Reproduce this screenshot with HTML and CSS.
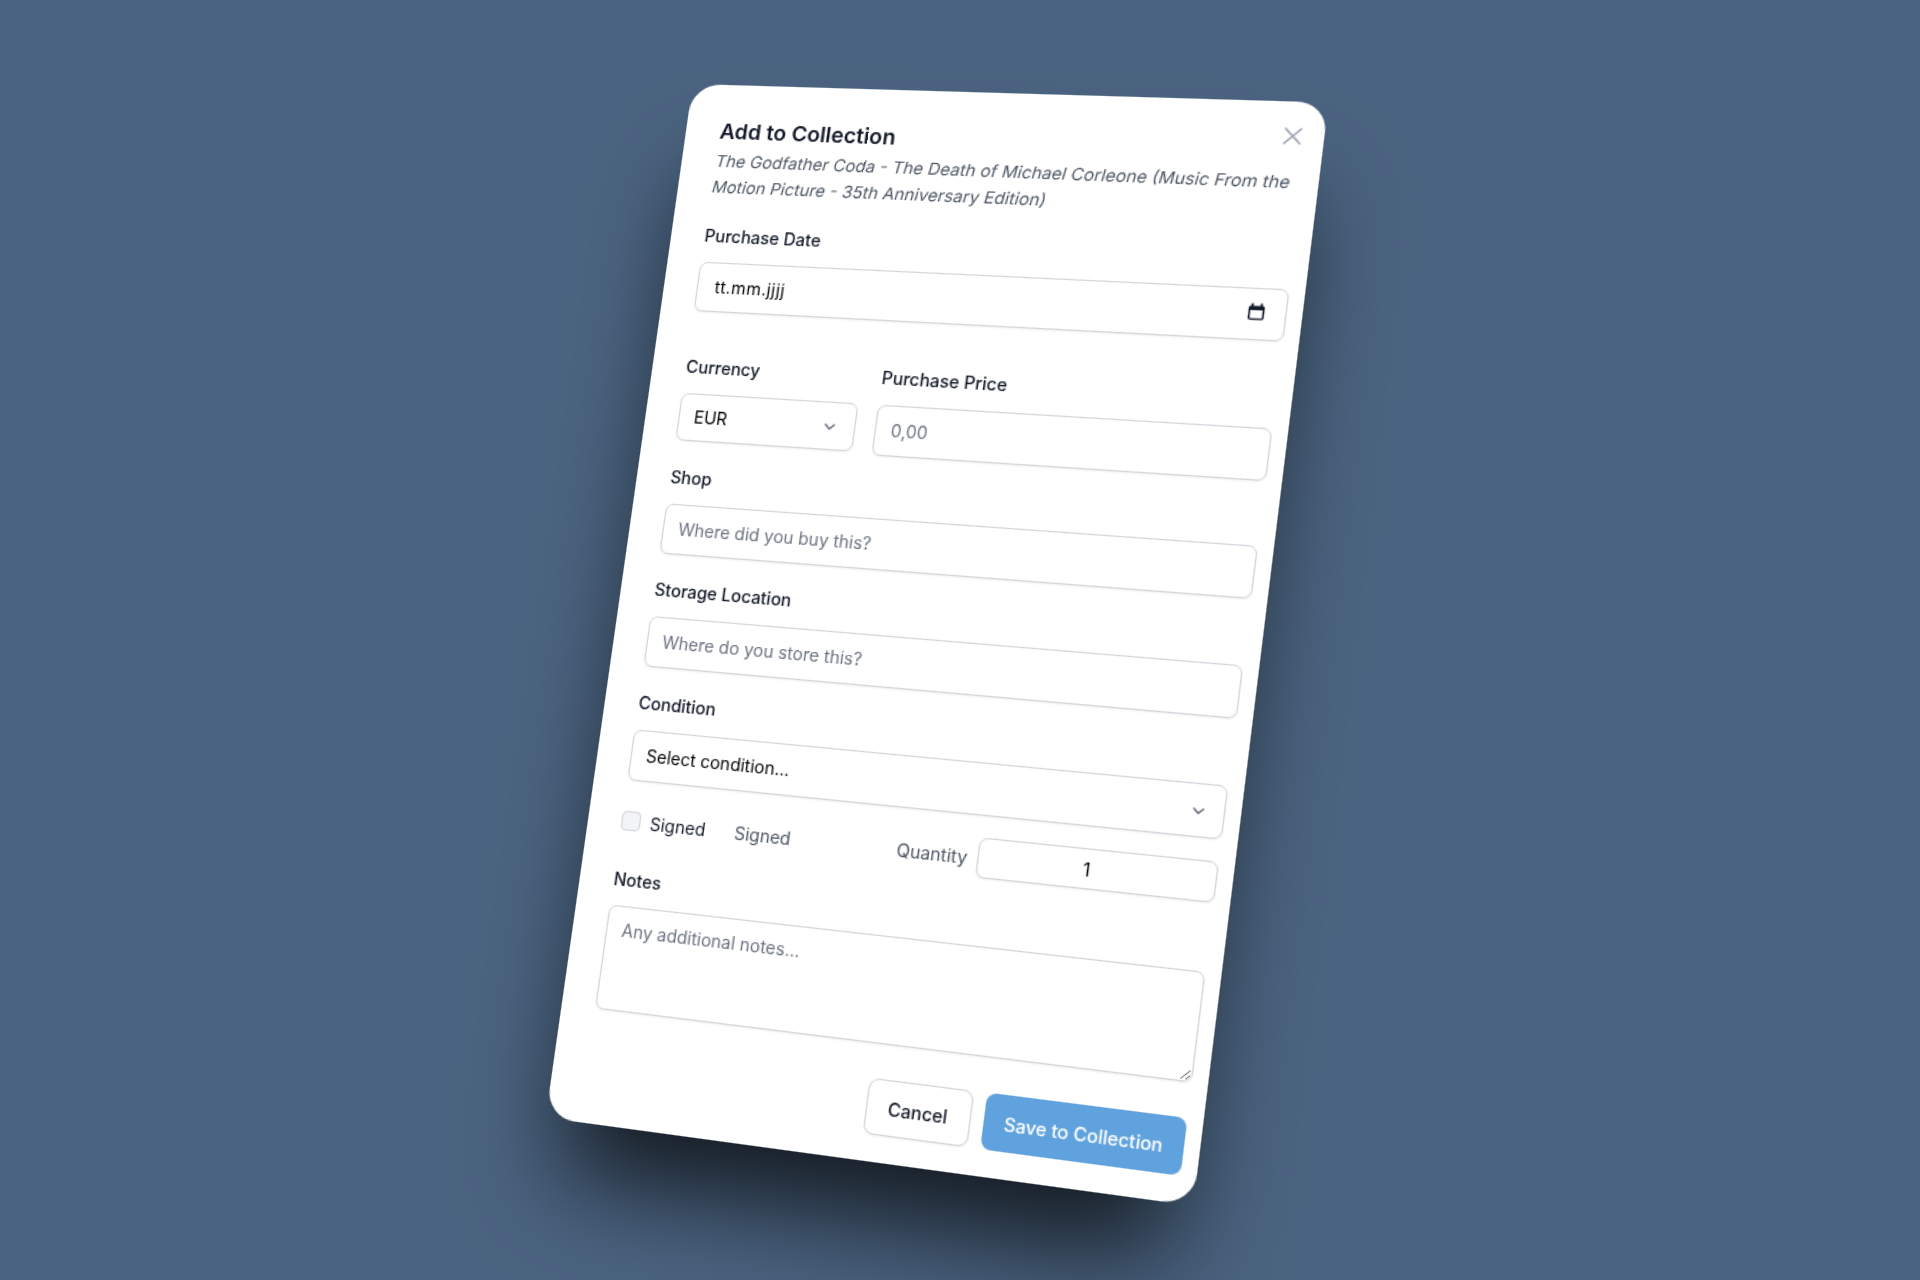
FILE: index.html
```html
<!DOCTYPE html>
<html lang="en">
<head>
<meta charset="utf-8">
<title>Add to Collection</title>
<link rel="stylesheet" href="styles.css">
</head>
<body>
<div class="modal">
  <button class="close" type="button" aria-label="Close">
    <svg viewBox="0 0 24 24" width="24" height="24" fill="none" stroke="currentColor" stroke-width="1.5" stroke-linecap="round"><path d="M6 6l12 12M18 6L6 18"/></svg>
  </button>
  <h2 class="title">Add to Collection</h2>
  <p class="subtitle"><span class="sub-line">The Godfather Coda - The Death of Michael Corleone (Music From the</span> <span class="sub-line">Motion Picture - 35th Anniversary Edition)</span></p>
  <form class="form">
    <div class="field date-field">
      <label class="label">Purchase Date</label>
      <div class="control">
        <input class="input date-input" type="text" value="tt.mm.jjjj">
        <svg class="cal" viewBox="0 0 14 14" width="14" height="15"><path d="M3.500 0v2.500M10.500 0v2.500" stroke="#111827" stroke-width="1.600"/><rect x="1.600" y="2.600" width="10.800" height="10" rx="1" fill="none" stroke="#111827" stroke-width="1.400"/><rect x="1.600" y="2.600" width="10.800" height="2.800" fill="#111827"/></svg>
      </div>
    </div>
    <div class="price-row">
      <div class="field currency">
        <label class="label">Currency</label>
        <div class="control">
          <select class="input select"><option>EUR</option></select>
          <svg class="chev" viewBox="0 0 20 20" width="16" height="16" fill="none" stroke="#6b7280" stroke-width="1.8" stroke-linecap="round" stroke-linejoin="round"><path d="M5.500 7.500L10 12l4.500-4.500"/></svg>
        </div>
      </div>
      <div class="field grow">
        <label class="label">Purchase Price</label>
        <input class="input" type="text" placeholder="0,00">
      </div>
    </div>
    <div class="field shop">
      <label class="label">Shop</label>
      <input class="input" type="text" placeholder="Where did you buy this?">
    </div>
    <div class="field storage">
      <label class="label">Storage Location</label>
      <input class="input" type="text" placeholder="Where do you store this?">
    </div>
    <div class="field condition">
      <label class="label">Condition</label>
      <div class="control">
        <select class="input select"><option>Select condition...</option></select>
        <svg class="chev" viewBox="0 0 20 20" width="16" height="16" fill="none" stroke="#6b7280" stroke-width="1.8" stroke-linecap="round" stroke-linejoin="round"><path d="M5.500 7.500L10 12l4.500-4.500"/></svg>
      </div>
    </div>
    <div class="signed-row">
      <label class="check-label"><input class="check" type="checkbox"><span>Signed</span></label>
      <span class="muted signed-again">Signed</span>
      <span class="muted quantity-label">Quantity</span>
      <input class="input quantity" type="text" value="1">
    </div>
    <div class="field notes">
      <label class="label">Notes</label>
      <textarea class="input area" placeholder="Any additional notes..."></textarea>
    </div>
    <div class="actions">
      <button class="btn cancel" type="button">Cancel</button>
      <button class="btn save" type="button">Save to Collection</button>
    </div>
  </form>
</div>
</body>
</html>
```

FILE: styles.css
```css
* { box-sizing: border-box; }
html, body { margin: 0; height: 1280px; overflow: hidden; }
body {
  background: #4a6380;
  font-family: "Inter", "Liberation Sans", sans-serif;
  color: #111827;
  font-size: 14px;
}
.modal {
  position: relative;
  width: 512px;
  height: 864px;
  padding: 29px 12px 20px 28px;
  background: #fff;
  border-radius: 24px;
  box-shadow: 0 60px 80px -18px rgba(0, 0, 0, .75);
  transform-origin: 0 0;
  transform: matrix3d(1.08467, .024004, 0, -.00011842, -.18966, 1.15653, 0, -.00003558, 0, 0, 1, 0, 692.7, 84, 0, 1);
  will-change: transform;
}
.close {
  position: absolute;
  top: 16px;
  right: 12px;
  width: 24px;
  height: 24px;
  padding: 0;
  border: 0;
  background: none;
  color: #9ca3af;
}
.close svg { display: block; }
.title { margin: 0 0 0 1px; font-size: 17.7px; line-height: 21px; font-weight: 600; color: #111827; }
.subtitle { margin: 5px 0 0 1px; font-size: 13.85px; line-height: 21.5px; color: #4b5563; }
.sub-line { display: block; white-space: nowrap; transform-origin: 0 50%; transform: skewX(-9deg); }
.form { display: flex; flex-direction: column; gap: 20.5px; margin-top: 21px; }
.field { display: flex; flex-direction: column; gap: 12px; min-width: 0; }
.label { padding-left: .5px; font-size: 14px; line-height: 20px; font-weight: 500; color: #111827; }
.control { position: relative; }
.input {
  display: block;
  width: 100%;
  height: 41.5px;
  padding: 0 12px;
  border: 1px solid #d1d5db;
  border-radius: 7px;
  background: #fff;
  box-shadow: 0 1px 2px rgba(0, 0, 0, .06);
  font: inherit;
  font-size: 14px;
  color: #000;
  outline: none;
}
.input::placeholder { color: #6b7280; opacity: 1; }
.date-input { padding-left: 14px; letter-spacing: .4px; }
.select { appearance: none; }
.date-field { margin-bottom: 17px; }
.cal { position: absolute; right: 16.5px; top: 12px; }
.chev { position: absolute; right: 12px; top: 13.5px; }
.price-row { display: flex; gap: 16px; }
.currency { width: 147px; flex: none; }
.currency .input { height: 39.5px; }
.currency .chev { top: 12.5px; right: 13px; }
.grow { flex: 1; }
.grow .label { padding-left: 0; }
.shop { margin-top: -1px; }
.signed-row { display: flex; align-items: center; margin-top: -3px; height: 32px; }
.check-label { display: flex; align-items: center; gap: 8px; }
.check {
  appearance: none;
  width: 16px;
  height: 16px;
  margin: 0;
  border: 1px solid #d1d5db;
  border-radius: 4px;
  background: #f3f4f6;
}
.muted { color: #4b5563; }
.signed-again { margin-left: 24px; }
.quantity-label { margin-left: auto; margin-right: 8px; }
.quantity { width: 183px; height: 32px; text-align: center; padding-right: 26px; }
.notes { gap: 11px; margin-top: 1px; }
.area { height: 85px; padding: 10.5px 12px; resize: vertical; }
.actions { display: flex; justify-content: flex-end; gap: 10.5px; margin-top: 7px; }
.btn { height: 44px; border-radius: 8px; font: inherit; font-size: 14px; font-weight: 500; padding: 0; white-space: nowrap; }
.cancel { width: 82px; border: 1px solid #d1d5db; background: #fff; color: #111827; box-shadow: 0 1px 2px rgba(0, 0, 0, .06); }
.save { width: 152px; border: 0; background: #60a2dd; color: #fff; }
```
